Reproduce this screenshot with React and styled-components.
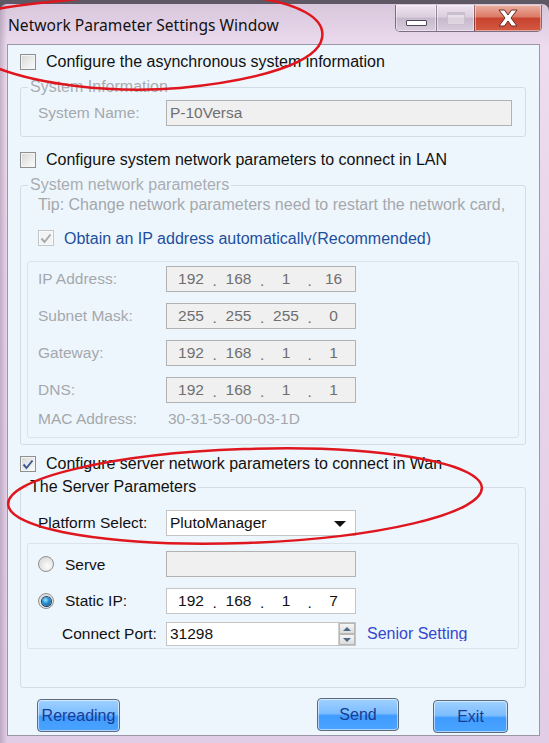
import React from "react";
import styled, { createGlobalStyle } from "styled-components";

const GlobalStyle = createGlobalStyle`
  html, body { margin: 0; padding: 0; background: #5e5865; }
  body {
    width: 549px;
    height: 743px;
    overflow: hidden;
    font-family: "Liberation Sans", Arial, sans-serif;
  }
  * { box-sizing: border-box; }
`;

const Frame = styled.div`
  position: relative;
  margin-top: 4px;
  width: 549px;
  height: 739px;
  border-radius: 7px 7px 0 0;
  background:
    linear-gradient(90deg, rgba(120, 100, 130, 0.35) 0px, rgba(255, 255, 255, 0) 7px),
    linear-gradient(180deg, #d8c7dc 0%, #eddcef 6%, #e8d4ea 40%, #e2cde6 100%);
  display: flex;
  flex-direction: column;
  padding: 0 9px 7px 7px;
`;

const TitleBar = styled.div`
  height: 40px;
  display: flex;
  justify-content: space-between;
  align-items: flex-start;
`;

const Title = styled.div`
  margin: 11px 0 0 1px;
  font-family: "Noto Sans", "Open Sans", sans-serif;
  font-size: 15.6px;
  line-height: 20px;
  color: #111;
`;

const Caption = styled.div`
  margin: 1px -2px 0 0;
  display: flex;
  height: 27px;
  border: 1px solid rgba(70, 55, 80, 0.65);
  border-top: none;
  border-radius: 0 0 5px 5px;
  overflow: hidden;
`;

const CapButton = styled.div`
  width: ${(p) => p.$w}px;
  display: flex;
  align-items: center;
  justify-content: center;
  border-left: ${(p) => (p.$first ? "none" : "1px solid rgba(70, 55, 80, 0.5)")};
  box-shadow: inset 0 0 0 1px rgba(255, 255, 255, 0.45);
  background: ${(p) =>
    p.$close
      ? "linear-gradient(180deg, #eab0a2 0%, #dc7a66 45%, #c8432e 52%, #d35a44 100%)"
      : "linear-gradient(180deg, #efe4f1 0%, #dbcede 45%, #c7b9cc 52%, #d9ccdd 100%)"};
`;

const MinGlyph = styled.span`
  width: 21px;
  height: 6px;
  margin-top: 10px;
  background: #fff;
  border: 1px solid #4b4757;
  border-radius: 1px;
`;

const MaxGlyph = styled.span`
  width: 18px;
  height: 13px;
  border: 1px solid #c9bfcd;
  border-top-width: 3px;
  background: rgba(255, 255, 255, 0.35);
`;

const Client = styled.div`
  flex: 1;
  border: 1px solid #9b97a6;
  background: #eef6fd;
  padding: 8px 13px 0 12px;
  display: flex;
  flex-direction: column;
`;

const CheckRow = styled.label`
  display: flex;
  align-items: center;
  gap: 10px;
  height: 18px;
  margin-top: ${(p) => p.$mt || 0}px;
  margin-left: ${(p) => p.$ml || 0}px;
  font-size: 16px;
  color: ${(p) => p.$color || "#111"};
  white-space: nowrap;
`;

const Box = styled.span`
  flex: none;
  width: 16px;
  height: 16px;
  border: 1px solid ${(p) => (p.$disabled ? "#c4c6c8" : "#8e8f8f")};
  background: ${(p) =>
    p.$disabled
      ? "#f3f4f5"
      : "linear-gradient(135deg, #d6d6d6 0%, #ececec 55%, #fbfbfb 100%)"};
  box-shadow: inset 0 0 0 1px ${(p) => (p.$disabled ? "#fafafa" : "#f4f4f4")};
  display: flex;
  align-items: center;
  justify-content: center;
`;

const Clip = styled.span`
  display: block;
  height: ${(p) => p.$h}px;
  line-height: 18px;
  overflow: hidden;
  white-space: nowrap;
  align-self: flex-start;
  margin-top: ${(p) => p.$top || 0}px;
`;

const Group = styled.fieldset`
  margin: ${(p) => p.$mt}px 0 0 0;
  width: 506px;
  min-width: 0;
  padding: ${(p) => p.$pt}px 6px ${(p) => p.$pb}px 0;
  border: 1px solid #d3dce5;
  border-radius: 3px;
  display: flex;
  flex-direction: column;
`;

const Legend = styled.legend`
  margin-left: 7px;
  padding: 0 2px;
  font-size: 16px;
  line-height: 18px;
  color: ${(p) => (p.$muted ? "#a9adb1" : "#111")};
`;

const Inner = styled.div`
  margin: ${(p) => p.$mt}px 0 0 6px;
  border: 1px solid #dae2ea;
  border-radius: 3px;
  padding: ${(p) => p.$pt}px 0 ${(p) => p.$pb}px 0;
  display: flex;
  flex-direction: column;
  gap: ${(p) => p.$gap || 0}px;
`;

const Row = styled.div`
  display: flex;
  align-items: center;
  height: ${(p) => p.$h || 26}px;
  padding-left: ${(p) => p.$pl || 0}px;
  margin-top: ${(p) => p.$mt || 0}px;
`;

const Label = styled.span`
  width: ${(p) => p.$w}px;
  flex: none;
  font-size: 15.5px;
  padding-left: ${(p) => p.$pl || 0}px;
  color: ${(p) => (p.$muted ? "#a4a8ac" : "#111")};
  white-space: nowrap;
`;

const RadioLabel = styled(Label)`
  display: flex;
  align-items: center;
`;

const TextBox = styled.div`
  width: ${(p) => p.$w || 190}px;
  height: ${(p) => p.$h || 26}px;
  border: 1px solid ${(p) => (p.$disabled ? "#b2b2b2" : "#c4c4c4")};
  background: ${(p) => (p.$disabled ? "#f0f0f0" : "#fff")};
  color: ${(p) => (p.$disabled ? "#6f6f6f" : "#111")};
  font-size: 15.5px;
  display: flex;
  align-items: center;
  padding-left: ${(p) => p.$pl || 0}px;
  position: relative;
`;

const Octet = styled.span`
  width: 40px;
  text-align: center;
`;

const Dot = styled.span`
  width: 7.5px;
  text-align: center;
  margin-top: 4px;
`;

const Plain = styled.span`
  font-size: ${(p) => p.$size || 16}px;
  color: ${(p) => p.$color || "#111"};
  padding-left: ${(p) => p.$pl || 0}px;
  white-space: nowrap;
`;

const LinkText = styled(Clip)`
  margin-left: 11px;
  font-size: 16px;
  color: #3447cf;
`;

const Radio = styled.span`
  flex: none;
  width: 16px;
  height: 16px;
  border-radius: 50%;
  border: 1px solid #8e8f8f;
  background: radial-gradient(circle at 60% 65%, #fdfdfd 0%, #e2e2e2 60%, #cfcfcf 100%);
  display: flex;
  align-items: center;
  justify-content: center;
  margin-right: 11px;
`;

const RadioDot = styled.span`
  width: 9px;
  height: 9px;
  border-radius: 50%;
  background: radial-gradient(circle at 40% 35%, #9fe3ff 0%, #2a93d2 40%, #0b4a80 100%);
  box-shadow: 0 0 0 1px #1c3e63;
`;

const Arrow = styled.span`
  position: absolute;
  right: 9px;
  top: 10px;
  width: 0;
  height: 0;
  border-left: 6px solid transparent;
  border-right: 6px solid transparent;
  border-top: 6px solid #111;
`;

const Spin = styled.div`
  position: absolute;
  right: 0;
  top: 0;
  bottom: 0;
  width: 17px;
  display: flex;
  flex-direction: column;
  border-left: 1px solid #d0d0d0;
`;

const SpinHalf = styled.span`
  flex: 1;
  display: flex;
  align-items: center;
  justify-content: center;
  background: linear-gradient(180deg, #f6f6f6, #dcdcdc);
  border: 1px solid #b7b7b7;
  &::after {
    content: "";
    border-left: 4px solid transparent;
    border-right: 4px solid transparent;
    ${(p) => (p.$up ? "border-bottom: 4px solid #4a6a8a;" : "border-top: 4px solid #4a6a8a;")}
  }
`;

const Footer = styled.div`
  display: flex;
  align-items: flex-start;
  margin-top: 10px;
  padding-left: 17px;
`;

const Button = styled.button`
  width: ${(p) => p.$w}px;
  height: 33px;
  margin-left: ${(p) => p.$ml || 0}px;
  margin-top: ${(p) => p.$mt || 0}px;
  padding: 0;
  border: 1px solid #5b6b7d;
  border-radius: 4px;
  box-shadow: inset 0 0 0 1px rgba(255, 255, 255, 0.55);
  background: linear-gradient(180deg, #9fd1ff 0%, #7dbdff 46%, #3f9cff 54%, #4aa3ff 100%);
  color: #183c95;
  font-family: "Liberation Sans", Arial, sans-serif;
  font-size: 16px;
`;

const Marks = styled.svg`
  position: absolute;
  left: 0;
  top: -4px;
  pointer-events: none;
`;

function Check({ checked, disabled }) {
  return (
    <Box $disabled={disabled}>
      {checked && (
        <svg width="12" height="11" viewBox="0 0 12 11">
          <path
            d="M1.5 5.5 L4.5 9 L10.5 1.5"
            fill="none"
            stroke={disabled ? "#a7a9ab" : "#3d5a92"}
            strokeWidth="2"
          />
        </svg>
      )}
    </Box>
  );
}

function IpBox({ parts, disabled }) {
  return (
    <TextBox $disabled={disabled} $pl={4}>
      <Octet>{parts[0]}</Octet>
      <Dot>.</Dot>
      <Octet>{parts[1]}</Octet>
      <Dot>.</Dot>
      <Octet>{parts[2]}</Octet>
      <Dot>.</Dot>
      <Octet>{parts[3]}</Octet>
    </TextBox>
  );
}

const lanRows = [
  ["IP Address:", ["192", "168", "1", "16"]],
  ["Subnet Mask:", ["255", "255", "255", "0"]],
  ["Gateway:", ["192", "168", "1", "1"]],
  ["DNS:", ["192", "168", "1", "1"]],
];

export default function App() {
  return (
    <>
      <GlobalStyle />
      <Frame>
        <TitleBar>
          <Title>Network Parameter Settings Window</Title>
          <Caption>
            <CapButton $w={40} $first>
              <MinGlyph />
            </CapButton>
            <CapButton $w={38}>
              <MaxGlyph />
            </CapButton>
            <CapButton $w={67} $close>
              <svg width="22" height="18" viewBox="0 0 22 18">
                <path
                  d="M2 1 H7.5 L11 6 L14.5 1 H20 L14 9 L20 17 H14.5 L11 12 L7.5 17 H2 L8 9 Z"
                  fill="#fff"
                  stroke="#6b2a22"
                  strokeWidth="1"
                  strokeLinejoin="round"
                />
              </svg>
            </CapButton>
          </Caption>
        </TitleBar>

        <Client>
          <CheckRow>
            <Check />
            Configure the asynchronous system information
          </CheckRow>

          <Group $mt={7} $pt={4} $pb={10}>
            <Legend $muted>System Information</Legend>
            <Row $pl={17}>
              <Label $w={128} $muted>System Name:</Label>
              <TextBox $w={346} $disabled $pl={3}>P-10Versa</TextBox>
            </Row>
          </Group>

          <CheckRow $mt={14}>
            <Check />
            Configure system network parameters to connect in LAN
          </CheckRow>

          <Group $mt={7} $pt={2} $pb={6}>
            <Legend $muted>System network parameters</Legend>
            <Row $h={18} $pl={17}>
              <Plain $color="#a4a8ac">
                Tip: Change network parameters need to restart the network card,
              </Plain>
            </Row>
            <CheckRow $mt={15} $ml={17} $color="#1d4f9e">
              <Check checked disabled />
              <Clip $h={15} $top={1}>Obtain an IP address automatically(Recommended)</Clip>
            </CheckRow>
            <Inner $mt={14} $pt={4} $pb={9} $gap={11}>
              {lanRows.map(([name, parts]) => (
                <Row key={name} $pl={10}>
                  <Label $w={128} $muted>{name}</Label>
                  <IpBox parts={parts} disabled />
                </Row>
              ))}
              <Row $h={18} $pl={10} $mt={-4}>
                <Label $w={128} $muted>MAC Address:</Label>
                <Plain $size={15.5} $color="#a4a8ac" $pl={2}>30-31-53-00-03-1D</Plain>
              </Row>
            </Inner>
          </Group>

          <CheckRow $mt={10}>
            <Check checked />
            Configure server network parameters to connect in Wan
          </CheckRow>

          <Group $mt={5} $pt={14} $pb={38}>
            <Legend>The Server Parameters</Legend>
            <Row $pl={17}>
              <Label $w={128}>Platform Select:</Label>
              <TextBox $pl={3}>
                PlutoManager
                <Arrow />
              </TextBox>
            </Row>
            <Inner $mt={7} $pt={7} $pb={2}>
              <Row $pl={10}>
                <RadioLabel $w={128}>
                  <Radio />
                  <Clip $h={15} $top={0}>Serve</Clip>
                </RadioLabel>
                <TextBox $disabled />
              </Row>
              <Row $pl={10} $mt={11}>
                <RadioLabel $w={128}>
                  <Radio>
                    <RadioDot />
                  </Radio>
                  Static IP:
                </RadioLabel>
                <IpBox parts={["192", "168", "1", "7"]} />
              </Row>
              <Row $pl={10} $mt={8} $h={24}>
                <Label $w={128} $pl={24}>Connect Port:</Label>
                <TextBox $h={24} $pl={3}>
                  31298
                  <Spin>
                    <SpinHalf $up />
                    <SpinHalf />
                  </Spin>
                </TextBox>
                <LinkText $h={16} $top={3}>Senior Setting</LinkText>
              </Row>
            </Inner>
          </Group>

          <Footer>
            <Button $w={83} $mt={1}>Rereading</Button>
            <Button $w={82} $ml={197}>Send</Button>
            <Button $w={75} $ml={34} $mt={2}>Exit</Button>
          </Footer>
        </Client>

        <Marks width="549" height="743" viewBox="0 0 549 743">
          <g fill="none" stroke="#e0161e" strokeWidth="2.5" strokeLinecap="round">
            <path d="M 250 -3 C 298 3, 326 18, 322 38 C 318 62, 262 80, 180 88 C 110 94, 35 84, -8 66" />
            <path d="M -8 10 C 25 3, 65 1, 105 -4" />
            <ellipse cx="245" cy="496" rx="237" ry="47" transform="rotate(-2 245 496)" />
          </g>
        </Marks>
      </Frame>
    </>
  );
}
